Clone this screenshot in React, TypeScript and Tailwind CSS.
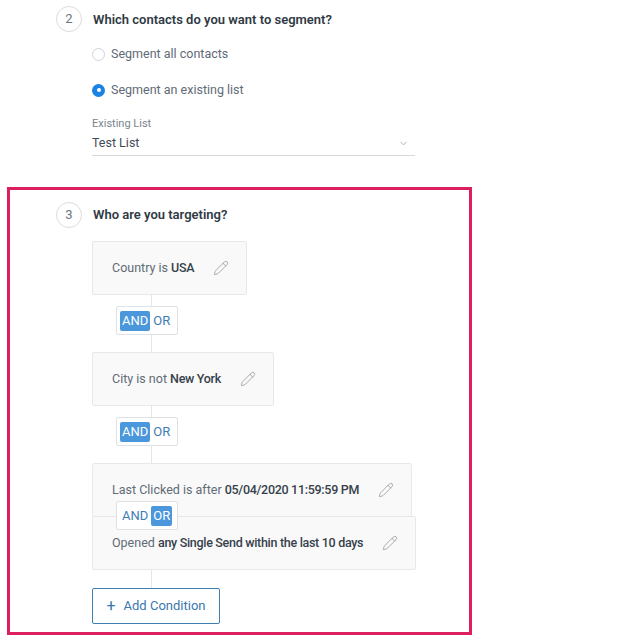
import { Pencil, ChevronDown } from 'lucide-react';

const font = { fontFamily: 'Roboto, "Liberation Sans", sans-serif' };

function StepCircle({ n }: { n: number }) {
  return (
    <div className="w-[26px] h-[26px] rounded-full border border-[#dcdcdc] flex items-center justify-center text-[13px] text-[#6b7580] shrink-0">
      {n}
    </div>
  );
}

function Radio({ checked, label }: { checked?: boolean; label: string }) {
  return (
    <div className="flex items-center gap-[6px] h-[20px]">
      {checked ? (
        <span className="w-[13px] h-[13px] rounded-full bg-[#1a82e2] flex items-center justify-center">
          <span className="w-[4px] h-[4px] rounded-full bg-white" />
        </span>
      ) : (
        <span className="w-[13px] h-[13px] rounded-full border border-[#cfd4d9] bg-white" />
      )}
      <span className="text-[12.5px] text-[#5f6b76]">{label}</span>
    </div>
  );
}

function Condition({ children, className = '' }: { children: React.ReactNode; className?: string }) {
  return (
    <div
      className={`relative flex items-center h-[54px] pl-[19px] pr-[17px] bg-[#f9f9f9] border border-[#e6e8ea] rounded-[2px] self-start ${className}`}
    >
      <span className="text-[12.5px] text-[#5f6b76] whitespace-nowrap">{children}</span>
      <Pencil size={16} strokeWidth={1.1} className="ml-[19px] text-[#8a9096]" />
    </div>
  );
}

function AndOr({ mode, className = '' }: { mode: 'and' | 'or'; className?: string }) {
  const on = 'bg-[#4a97dc] text-white rounded-[2px] px-[2px]';
  const off = 'text-[#3e7db3] px-[2px]';
  return (
    <div
      className={`flex items-center h-[29px] w-[62px] px-[3px] gap-[1px] bg-white border border-[#dfe2e5] rounded-[2px] text-[13px] ${className}`}
    >
      <span className={`h-[20px] leading-[20px] ${mode === 'and' ? on : off}`}>AND</span>
      <span className={`h-[20px] leading-[20px] ${mode === 'or' ? on : off}`}>OR</span>
    </div>
  );
}

const bold = 'font-medium text-[#36414b] tracking-[-0.3px]';

export default function App() {
  return (
    <div className="w-[643px] min-h-[638px] bg-white" style={font}>
      {/* step 2 */}
      <div className="pl-[56px] pt-[6px]">
        <div className="flex items-center gap-[11px]">
          <StepCircle n={2} />
          <h2 className="text-[13px] font-semibold text-[#2f3a45] pt-[2px]">Which contacts do you want to segment?</h2>
        </div>
        <div className="pl-[36px] mt-[12px] flex flex-col gap-[16px]">
          <Radio label="Segment all contacts" />
          <Radio checked label="Segment an existing list" />
        </div>
        <div className="ml-[36px] mt-[16px] w-[323px]">
          <div className="text-[11px] text-[#7a848e] leading-[16px]">Existing List</div>
          <div className="flex items-center justify-between h-[24px] border-b border-[#d6d9dc]">
            <span className="text-[12.5px] text-[#3f4a54]">Test List</span>
            <ChevronDown size={11} strokeWidth={1.5} className="mr-[6px] text-[#8a9096]" />
          </div>
        </div>
      </div>

      {/* step 3 */}
      <div className="ml-[7px] mt-[31px] w-[465px] border-[3px] border-[#dc1f5e] pl-[46px] pt-[12px] pb-[8px]">
        <div className="flex items-center gap-[11px]">
          <StepCircle n={3} />
          <h2 className="text-[13px] font-semibold text-[#2f3a45]">Who are you targeting?</h2>
        </div>
        <div className="relative ml-[36px] mt-[13px] flex flex-col">
          <div className="absolute left-[59px] top-0 bottom-0 w-px bg-[#e4e6e8]" />
          <Condition>
            Country is <b className={bold}>USA</b>
          </Condition>
          <AndOr mode="and" className="relative ml-[24px] mt-[11px] mb-[17px]" />
          <Condition>
            City is not <b className={bold}>New York</b>
          </Condition>
          <AndOr mode="and" className="relative ml-[24px] mt-[11px] mb-[17px]" />
          <div className="relative flex flex-col">
            <Condition>
              Last Clicked is after <b className={bold}>05/04/2020 11:59:59 PM</b>
            </Condition>
            <Condition className="-mt-px">
              Opened <b className={bold}>any Single Send within the last 10 days</b>
            </Condition>
            <AndOr mode="or" className="absolute left-[24px] top-[38px] z-10" />
          </div>
          <button className="relative mt-[18px] self-start h-[36px] w-[128px] flex items-center justify-center gap-[8px] border border-[#3d7fb3] rounded-[2px] bg-white text-[13px] text-[#3a78ad]">
            <span className="text-[16px] leading-none">+</span>
            Add Condition
          </button>
        </div>
      </div>
    </div>
  );
}
